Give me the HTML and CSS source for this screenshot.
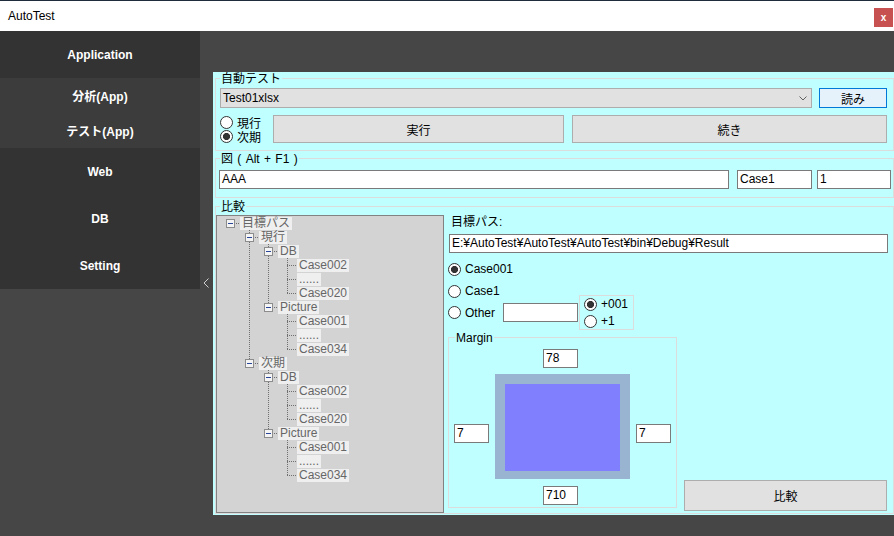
FILE: index.html
```html
<!DOCTYPE html>
<html lang="ja">
<head>
<meta charset="utf-8">
<title>AutoTest</title>
<link rel="stylesheet" href="styles.css">
</head>
<body>
<div class="window">
  <header class="titlebar">
    <span class="title">AutoTest</span>
    <span class="close">x</span>
  </header>
  <div class="content">
    <nav class="sidebar">
      <div class="nav-item tall dark">Application</div>
      <div class="light">
        <div class="nav-item short">分析(App)</div>
        <div class="nav-item short">テスト(App)</div>
      </div>
      <div class="dark">
        <div class="nav-item tall">Web</div>
        <div class="nav-item tall">DB</div>
        <div class="nav-item tall">Setting</div>
      </div>
    </nav>
    <div class="toggle">
      <svg width="6" height="10" viewBox="0 0 6 10"><polyline points="5.5,0.5 1,5 5.5,9.5" fill="none" stroke="#cfcfcf" stroke-width="1"/></svg>
    </div>
    <main class="panel">
      <section class="group g1">
        <div class="legend">自動テスト</div>
        <div class="r1">
          <div class="combo"><span class="combo-text">Test01xlsx</span><svg class="chev" width="8" height="5" viewBox="0 0 8 5"><polyline points="0.5,0.5 4,4 7.5,0.5" fill="none" stroke="#606060" stroke-width="1"/></svg></div>
          <div class="btn btn-read">読み</div>
        </div>
        <div class="r2">
          <div class="radios">
            <div class="radio"><span class="dot"></span>現行</div>
            <div class="radio"><span class="dot on"></span>次期</div>
          </div>
          <div class="btn btn-run">実行</div>
          <div class="btn btn-cont">続き</div>
        </div>
      </section>

      <section class="group g2">
        <div class="legend">図 ( Alt + F1 )</div>
        <div class="r3">
          <div class="tb tb-aaa">AAA</div>
          <div class="tb tb-case">Case1</div>
          <div class="tb tb-one">1</div>
        </div>
      </section>

      <section class="group g3">
        <div class="legend">比較</div>
        <div class="cmp">
          <div class="tree">
            <ul class="tv">
              <li>
                <div class="tn"><span class="ex"></span><span class="tl">目標パス</span></div>
                <ul>
                  <li>
                    <div class="tn"><span class="ex"></span><span class="tl">現行</span></div>
                    <ul>
                      <li>
                        <div class="tn"><span class="ex"></span><span class="tl">DB</span></div>
                        <ul>
                          <li><div class="tn leaf"><span class="tl">Case002</span></div></li>
                          <li><div class="tn leaf"><span class="tl">......</span></div></li>
                          <li><div class="tn leaf"><span class="tl">Case020</span></div></li>
                        </ul>
                      </li>
                      <li>
                        <div class="tn"><span class="ex"></span><span class="tl">Picture</span></div>
                        <ul>
                          <li><div class="tn leaf"><span class="tl">Case001</span></div></li>
                          <li><div class="tn leaf"><span class="tl">......</span></div></li>
                          <li><div class="tn leaf"><span class="tl">Case034</span></div></li>
                        </ul>
                      </li>
                    </ul>
                  </li>
                  <li>
                    <div class="tn"><span class="ex"></span><span class="tl">次期</span></div>
                    <ul>
                      <li>
                        <div class="tn"><span class="ex"></span><span class="tl">DB</span></div>
                        <ul>
                          <li><div class="tn leaf"><span class="tl">Case002</span></div></li>
                          <li><div class="tn leaf"><span class="tl">......</span></div></li>
                          <li><div class="tn leaf"><span class="tl">Case020</span></div></li>
                        </ul>
                      </li>
                      <li>
                        <div class="tn"><span class="ex"></span><span class="tl">Picture</span></div>
                        <ul>
                          <li><div class="tn leaf"><span class="tl">Case001</span></div></li>
                          <li><div class="tn leaf"><span class="tl">......</span></div></li>
                          <li><div class="tn leaf"><span class="tl">Case034</span></div></li>
                        </ul>
                      </li>
                    </ul>
                  </li>
                </ul>
              </li>
            </ul>
          </div>

          <div class="cmp-right">
            <div class="lbl">目標パス:</div>
            <div class="tb tb-path">E:¥AutoTest¥AutoTest¥AutoTest¥bin¥Debug¥Result</div>
            <div class="radio r-c001"><span class="dot on"></span>Case001</div>
            <div class="radio r-c1"><span class="dot"></span>Case1</div>
            <div class="other-row">
              <div class="radio r-other"><span class="dot"></span>Other</div>
              <div class="tb tb-other"></div>
              <div class="suffix">
                <div class="radio"><span class="dot on"></span>+001</div>
                <div class="radio"><span class="dot"></span>+1</div>
              </div>
            </div>
            <div class="bottom">
              <section class="group mgroup">
                <div class="legend">Margin</div>
                <div class="mgrid">
                  <div class="tb num m-top">78</div>
                  <div class="tb num m-left">7</div>
                  <div class="paper"><div class="paper-inner"></div></div>
                  <div class="tb num m-right">7</div>
                  <div class="tb num m-bot">710</div>
                </div>
              </section>
              <div class="btn btn-cmp">比較</div>
            </div>
          </div>
        </div>
      </section>
    </main>
  </div>
</div>
</body>
</html>
```

FILE: styles.css
```css
* { box-sizing: border-box; }
html, body { margin: 0; padding: 0; }
body {
  width: 894px;
  height: 536px;
  overflow: hidden;
  background: #464646;
  font-family: "Liberation Sans", "Noto Sans CJK JP", sans-serif;
  font-size: 12px;
  color: #000;
}
.window { display: flex; flex-direction: column; height: 536px; }

/* title bar */
.titlebar {
  height: 31px;
  flex: none;
  display: flex;
  align-items: flex-start;
  background: #fff;
  border-top: 1px solid #1f2d3a;
  padding: 0 1px 0 8px;
}
.title { flex: 1; line-height: 30px; font-size: 12px; }
.close {
  margin-top: 7px;
  width: 19px;
  height: 19px;
  background: #c75050;
  color: #fff;
  font-weight: bold;
  font-size: 10px;
  line-height: 1;
  display: flex;
  align-items: center;
  justify-content: center;
}

/* body */
.content { flex: 1; display: flex; min-height: 0; }
.sidebar { width: 200px; flex: none; display: flex; flex-direction: column; }
.dark { background: #333333; }
.light { background: #3c3c3c; }
.nav-item {
  display: flex;
  align-items: center;
  justify-content: center;
  color: #fff;
  font-weight: bold;
  font-size: 12px;
}
.tall { height: 47px; }
.short { height: 35px; }
.toggle { width: 13px; flex: none; padding: 247px 0 0 3px; }
.toggle svg { display: block; }

.panel {
  flex: 1;
  margin-top: 41px;
  height: 443px;
  background: #c0ffff;
  padding: 6px 0 1px 2px;
  display: flex;
  flex-direction: column;
}

/* group boxes */
.group {
  border: 1px solid #dcdcdc;
  display: flex;
  flex-direction: column;
}
.legend {
  align-self: flex-start;
  height: 14px;
  line-height: 14px;
  margin-top: -7px;
  padding: 0 1px;
  background: #c0ffff;
  white-space: nowrap;
}

.g1 { padding: 0 6px 7px 4px; }
.g1 .legend { margin-left: 0; }
.r1 { display: flex; height: 20px; margin-top: 2px; }
.combo {
  width: 592px;
  height: 20px;
  background: #e1e1e1;
  border: 1px solid #adadad;
  display: flex;
  align-items: center;
  padding: 0 4px 0 2px;
}
.combo-text { flex: 1; }
.chev { display: block; }
.btn {
  background: #e1e1e1;
  border: 1px solid #adadad;
  display: flex;
  align-items: center;
  justify-content: center;
}
.btn-read {
  width: 68px;
  margin-left: 7px;
  background: #e5f1fb;
  border-color: #0078d7;
}
.r2 { display: flex; height: 28px; margin-top: 7px; }
.radios { width: 53px; display: flex; flex-direction: column; }
.radio {
  display: flex;
  align-items: center;
  height: 14px;
  white-space: nowrap;
}
.dot {
  width: 13px;
  height: 13px;
  flex: none;
  border: 1px solid #333;
  border-radius: 50%;
  background: #fff;
  margin-right: 4px;
}
.dot.on { background: radial-gradient(circle, #333 0 3.2px, #fff 3.9px); }
.btn-run { width: 291px; }
.btn-cont { flex: 1; margin-left: 8px; }

.g2 { margin-top: 7px; padding: 0 2px 8px 3px; }
.g2 .legend { margin-left: 1px; word-spacing: 1px; }
.r3 { display: flex; height: 19px; margin-top: 4px; }
.tb {
  height: 19px;
  background: #fff;
  border: 1px solid #7a7a7a;
  padding-left: 2px;
  line-height: 17px;
  white-space: nowrap;
  overflow: hidden;
}
.tb-aaa { width: 510px; }
.tb-case { width: 75px; margin-left: 8px; }
.tb-one { width: 74px; margin-left: 5px; }

.g3 { margin-top: 8px; }
.g3 .legend { margin-left: 4px; }
.cmp { display: flex; }

/* tree */
.tree {
  width: 228px;
  height: 298px;
  margin-top: 1px;
  border: 1px solid #828282;
  background: #d3d3d3;
  font-size: 12px;
}
.tv, .tv ul { list-style: none; margin: 0; padding: 0; }
.tv { padding-left: 4px; }
.tv ul { padding-left: 19px; }
.tv ul > li {
  background: repeating-linear-gradient(to bottom, #6f6f6f 0 1px, transparent 1px 2px) 9px 0 / 1px 100% no-repeat;
}
.tv ul > li:last-child { background-size: 1px 7px; }
.tn {
  height: 14px;
  display: flex;
  align-items: center;
  padding-left: 5px;
  background: repeating-linear-gradient(to right, #6f6f6f 0 1px, transparent 1px 2px) 9px 7px / 10px 1px no-repeat;
}
.tn.leaf { padding-left: 19px; }
.ex {
  width: 9px;
  height: 9px;
  flex: none;
  margin-right: 5px;
  border: 1px solid #8c8c8c;
  background: #f4f4f4;
  display: flex;
  align-items: center;
  justify-content: center;
}
.ex::after {
  content: "";
  width: 5px;
  height: 1px;
  background: #2a4699;
}
.tl {
  height: 13px;
  line-height: 13px;
  padding: 0 2px;
  background: #efefef;
  color: #666;
  white-space: nowrap;
}

/* right of compare */
.cmp-right {
  flex: 1;
  display: flex;
  flex-direction: column;
  padding: 0 6px 0 4px;
}
.lbl { height: 14px; line-height: 14px; margin: 1px 0 0 3px; }
.tb-path { margin: 5px -1px 0 1px; }
.r-c001 { margin-top: 9px; }
.r-c1 { margin-top: 8px; }
.other-row {
  display: flex;
  align-items: center;
  height: 35px;
  margin-top: -3px;
}
.r-other { width: 55px; }
.tb-other { width: 75px; }
.suffix {
  width: 55px;
  height: 35px;
  margin-left: 1px;
  border: 1px solid #dcdcdc;
  padding: 1px 0 0 4px;
  display: flex;
  flex-direction: column;
  gap: 3px;
}
.bottom {
  display: flex;
  align-items: flex-end;
  margin-top: 7px;
}
.mgroup {
  width: 229px;
  height: 171px;
  margin-bottom: 3px;
  padding: 0 5px 2px 5px;
}
.mgroup .legend { margin-left: 1px; }
.mgrid {
  display: grid;
  grid-template-columns: 35px 135px 35px;
  grid-template-rows: 19px 105px 20px;
  column-gap: 6px;
  row-gap: 6px;
  margin-top: 4px;
}
.num { width: 35px; }
.m-top { grid-column: 2; grid-row: 1; margin-left: 48px; }
.m-left { grid-column: 1; grid-row: 2; align-self: start; margin-top: 50px; }
.m-right { grid-column: 3; grid-row: 2; align-self: start; margin-top: 50px; }
.m-bot { grid-column: 2; grid-row: 3; margin-left: 48px; align-self: end; }
.paper {
  grid-column: 2;
  grid-row: 2;
  background: #98b4d0;
  padding: 10px 10px 8px 10px;
}
.paper-inner { width: 100%; height: 100%; background: #8080ff; }
.btn-cmp { flex: 1; height: 31px; margin-left: 7px; }
```
